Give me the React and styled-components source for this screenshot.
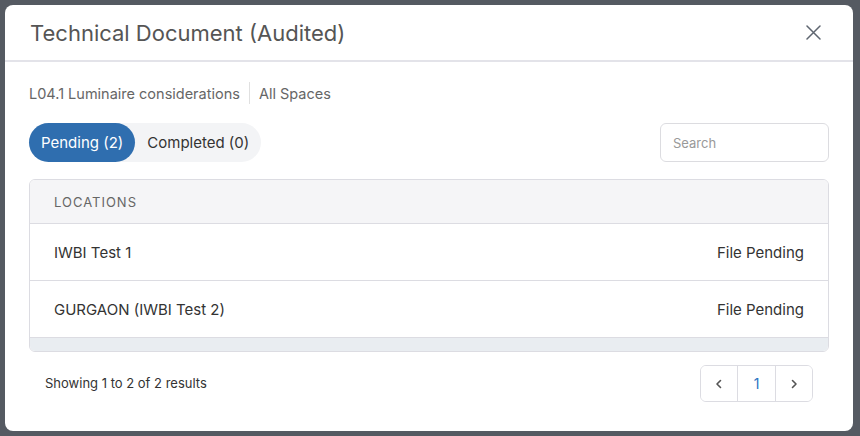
import React, { useState } from 'react';
import styled, { createGlobalStyle } from 'styled-components';

const GlobalStyle = createGlobalStyle`
  html, body {
    margin: 0;
    padding: 0;
    height: 100%;
  }
  body {
    font-family: 'Inter', 'Noto Sans', sans-serif;
    background: #555a62;
  }
`;

const Backdrop = styled.div`
  width: 860px;
  height: 436px;
  box-sizing: border-box;
  padding: 5px 7px 5px 5px;
  background: #555a62;
`;

const Modal = styled.div`
  height: 100%;
  background: #fff;
  border-radius: 8px;
  display: flex;
  flex-direction: column;
  overflow: hidden;
`;

const Header = styled.div`
  height: 55px;
  display: flex;
  align-items: center;
  justify-content: space-between;
  padding: 0 32px 0 25px;
  border-bottom: 2px solid #e3e3e9;
`;

const Title = styled.h2`
  margin: 0;
  font-size: 22px;
  font-weight: 400;
  color: #555;
`;

const CloseButton = styled.button`
  border: none;
  background: none;
  padding: 0;
  width: 15px;
  height: 15px;
  display: flex;
  align-items: center;
  justify-content: center;
  cursor: pointer;
`;

const Body = styled.div`
  padding: 0 24px 0 24px;
  display: flex;
  flex-direction: column;
`;

const Breadcrumb = styled.div`
  display: flex;
  align-items: center;
  height: 26px;
  margin-top: 18px;
  font-size: 14.5px;
  color: #666;
`;

const Divider = styled.span`
  width: 1px;
  height: 22px;
  background: #e0e0e0;
  margin: 0 9px 0 9px;
`;

const Toolbar = styled.div`
  display: flex;
  align-items: center;
  justify-content: space-between;
  margin-top: 17px;
`;

const Tabs = styled.div`
  display: flex;
  background: #f3f4f6;
  border-radius: 20px;
  height: 39px;
`;

const Tab = styled.button`
  border: none;
  border-radius: 20px;
  height: 39px;
  padding: 0 12px;
  font-family: inherit;
  font-size: 15px;
  color: ${p => (p.$active ? '#fff' : '#333')};
  background: ${p => (p.$active ? '#2f6eaf' : 'transparent')};
  cursor: pointer;
`;

const SearchInput = styled.input`
  width: 169px;
  height: 39px;
  box-sizing: border-box;
  border: 1px solid #dcdce0;
  border-radius: 6px;
  padding: 0 12px;
  font-family: inherit;
  font-size: 13px;
  color: #333;
  &::placeholder {
    color: #999;
  }
`;

const Table = styled.div`
  margin-top: 17px;
  border: 1px solid #dcdce2;
  border-radius: 6px;
  overflow: hidden;
`;

const HeadRow = styled.div`
  height: 43px;
  display: flex;
  align-items: center;
  padding: 0 24px;
  background: #f5f5f7;
  border-bottom: 1px solid #dcdce2;
  font-size: 13px;
  letter-spacing: 1px;
  color: #666;
`;

const Row = styled.div`
  height: 56px;
  display: flex;
  align-items: center;
  justify-content: space-between;
  padding: 0 24px;
  font-size: 15px;
  color: #333;
  border-bottom: 1px solid #dcdce2;
`;

const ScrollTrack = styled.div`
  height: 13px;
  background: #e9edf1;
`;

const Footer = styled.div`
  display: flex;
  align-items: center;
  justify-content: space-between;
  margin-top: 13px;
  padding: 0 16px 0 16px;
`;

const Summary = styled.span`
  font-size: 13px;
  color: #333;
  margin-top: -2px;
`;

const Pager = styled.div`
  display: flex;
  box-sizing: border-box;
  border: 1px solid #dcdce2;
  border-radius: 6px;
  height: 37px;
  overflow: hidden;
`;

const PageCell = styled.button`
  width: ${p => p.$w}px;
  border: none;
  border-left: ${p => (p.$first ? 'none' : '1px solid #dcdce2')};
  background: #fff;
  display: flex;
  align-items: center;
  justify-content: center;
  font-family: inherit;
  font-size: 14px;
  color: ${p => (p.$current ? '#2b73c2' : '#555')};
  cursor: pointer;
  padding: 0;
`;

const Chevron = ({ dir }) => (
  <svg width="10" height="10" viewBox="0 0 10 10">
    <path
      d={dir === 'left' ? 'M6.5 1.5 L3 5 L6.5 8.5' : 'M3.5 1.5 L7 5 L3.5 8.5'}
      fill="none"
      stroke="#555"
      strokeWidth="1.6"
      strokeLinecap="round"
      strokeLinejoin="round"
    />
  </svg>
);

const locations = [
  { name: 'IWBI Test 1', status: 'File Pending' },
  { name: 'GURGAON (IWBI Test 2)', status: 'File Pending' }
];

const App = () => {
  const [tab, setTab] = useState('pending');

  return (
    <>
      <GlobalStyle />
      <Backdrop>
        <Modal>
          <Header>
            <Title>Technical Document (Audited)</Title>
            <CloseButton aria-label="Close">
              <svg width="15" height="15" viewBox="0 0 15 15">
                <path d="M1 1 L14 14 M14 1 L1 14" stroke="#5f6670" strokeWidth="1.5" strokeLinecap="round" />
              </svg>
            </CloseButton>
          </Header>
          <Body>
            <Breadcrumb>
              <span>L04.1 Luminaire considerations</span>
              <Divider />
              <span>All Spaces</span>
            </Breadcrumb>
            <Toolbar>
              <Tabs>
                <Tab $active={tab === 'pending'} onClick={() => setTab('pending')}>
                  Pending (2)
                </Tab>
                <Tab $active={tab === 'completed'} onClick={() => setTab('completed')}>
                  Completed (0)
                </Tab>
              </Tabs>
              <SearchInput placeholder="Search" />
            </Toolbar>
            <Table>
              <HeadRow>LOCATIONS</HeadRow>
              {locations.map(loc => (
                <Row key={loc.name}>
                  <span>{loc.name}</span>
                  <span>{loc.status}</span>
                </Row>
              ))}
              <ScrollTrack />
            </Table>
            <Footer>
              <Summary>Showing 1 to 2 of 2 results</Summary>
              <Pager>
                <PageCell $w={36} $first aria-label="Previous">
                  <Chevron dir="left" />
                </PageCell>
                <PageCell $w={38} $current>
                  1
                </PageCell>
                <PageCell $w={37} aria-label="Next">
                  <Chevron dir="right" />
                </PageCell>
              </Pager>
            </Footer>
          </Body>
        </Modal>
      </Backdrop>
    </>
  );
};

export default App;
